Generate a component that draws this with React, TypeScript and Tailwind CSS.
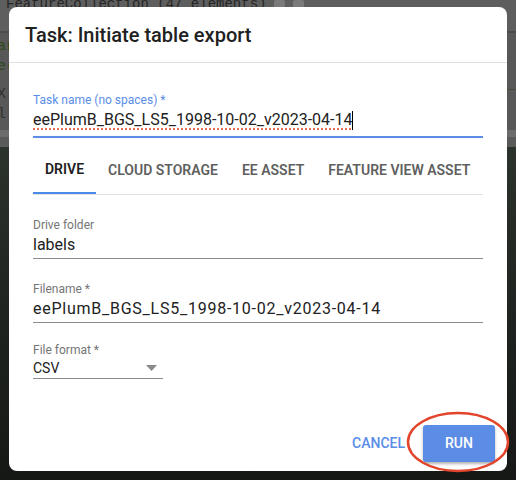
import React from "react";

function Field({
  label,
  value,
  wide,
}: {
  label: string;
  value: string;
  wide?: boolean;
}) {
  return (
    <div className="flex flex-col">
      <label className="text-[12px] leading-4 text-[#757575]">{label}</label>
      <div
        className={
          wide
            ? "text-[16px] leading-6 tracking-[0.75px] text-[#212121] pb-px border-b border-[#8a8a8a]"
            : "text-[16px] leading-6 text-[#212121] pb-px border-b border-[#8a8a8a]"
        }
      >
        {value}
      </div>
    </div>
  );
}

const tabs = ["DRIVE", "CLOUD STORAGE", "EE ASSET", "FEATURE VIEW ASSET"];

export default function App() {
  return (
    <div className="relative w-[516px] h-[480px] overflow-hidden bg-[#1e221f] font-['Roboto','Liberation_Sans',sans-serif]">
      {/* page behind the dialog, dimmed */}
      <div className="flex flex-col">
        <div className="h-[31px] bg-[#5e5e5e] px-[6px] font-['Liberation_Mono',monospace] text-[14px] leading-[14px] text-[#262626] flex gap-[8px]">
          <span className="-mt-[3px]">FeatureCollection (47 elements)</span>
          <span className="w-[11px] h-[9px] rounded-[2px] bg-[#7a7a7a]" />
          <span className="w-[11px] h-[9px] rounded-[2px] bg-[#7a7a7a]" />
        </div>
        <div className="h-[2px] bg-[#4b4b4b]" />
        <div className="h-[97px] bg-[#585858] font-['Liberation_Mono',monospace] text-[15px] leading-[20px] text-[#2e4a1c] flex justify-between">
          <div className="flex flex-col pt-[4px]">
            <span className="-ml-[3px]">ar</span>
            <span className="-ml-[3px]">e(</span>
            <span className="-ml-[3px] mt-[8px] text-[#303030]">X</span>
            <span className="-ml-[3px] text-[#303030]">l</span>
          </div>
          <div className="pt-[42px]">r_</div>
        </div>
        <div className="h-[7px] bg-[#6c6c6c]" />
        <div className="h-[10px] bg-[#5a5a5a]" />
        <div className="h-[333px] bg-gradient-to-b from-[#2c322c] via-[#1f2420] to-[#161816]" />
      </div>

      {/* dialog */}
      <div className="absolute left-[9px] top-[7px] w-[498px] h-[464px] bg-white rounded-[8px] flex flex-col">
        <div className="h-[56px] px-4 flex items-center border-b border-[#e0e0e0]">
          <h2 className="text-[20px] font-medium text-[#212121]">
            Task: Initiate table export
          </h2>
        </div>

        <div className="flex-1 px-6 pt-[29px] flex flex-col">
          <div className="flex flex-col">
            <label className="text-[12px] leading-4 text-[#5a8de8]">
              Task name (no spaces) *
            </label>
            <div className="text-[16px] leading-6 text-[#212121] pb-1 border-b-2 border-[#5b8ce6] flex items-center">
              <span className="underline decoration-dotted decoration-[#e86a5e] decoration-2 underline-offset-[3px]">
                eePlumB_BGS_LS5_1998-10-02_v2023-04-14
              </span>
              <span className="w-px h-[19px] bg-black" />
            </div>
          </div>

          <div className="mt-2 flex border-b border-[#e0e0e0]">
            {tabs.map((t, i) => (
              <div
                key={t}
                className={
                  i === 0
                    ? "h-[48px] px-3 flex items-center whitespace-nowrap text-[14px] font-semibold text-[#212121] border-b-2 border-[#4a8ae8] -mb-px"
                    : "h-[48px] px-3 flex items-center whitespace-nowrap text-[14px] font-semibold text-[#5f5f5f]"
                }
              >
                {t}
              </div>
            ))}
          </div>

          <div className="mt-[22px] flex flex-col gap-[22px]">
            <Field label="Drive folder" value="labels" />
            <Field label="Filename *" value="eePlumB_BGS_LS5_1998-10-02_v2023-04-14" wide />
            <div className="-mt-[3px] flex flex-col w-[130px]">
              <label className="text-[12px] leading-4 text-[#757575]">File format *</label>
              <div className="flex items-center justify-between text-[14px] leading-5 text-[#212121] pb-0 border-b border-[#8a8a8a]">
                <span>CSV</span>
                <svg width="11" height="6" viewBox="0 0 11 6" className="mr-[6px]">
                  <path d="M0 0 L11 0 L5.5 6 Z" fill="#8a8a8a" />
                </svg>
              </div>
            </div>
          </div>
        </div>

        <div className="flex justify-end items-center gap-[10px] pr-3 pb-[9px]">
          <button className="h-[37px] px-2 text-[14px] font-medium text-[#5a8de8]">CANCEL</button>
          <button className="w-[72px] h-[37px] rounded-[3px] bg-[#5b8ce6] text-white text-[14px] font-medium shadow-[0_2px_3px_rgba(0,0,0,0.3)]">
            RUN
          </button>
        </div>
      </div>

      {/* annotation circle */}
      <svg className="absolute left-[405px] top-[410px]" width="106" height="64" viewBox="0 0 106 64">
        <ellipse cx="53" cy="32" rx="50" ry="29" fill="none" stroke="#e2452b" strokeWidth="2.5" />
      </svg>
    </div>
  );
}
